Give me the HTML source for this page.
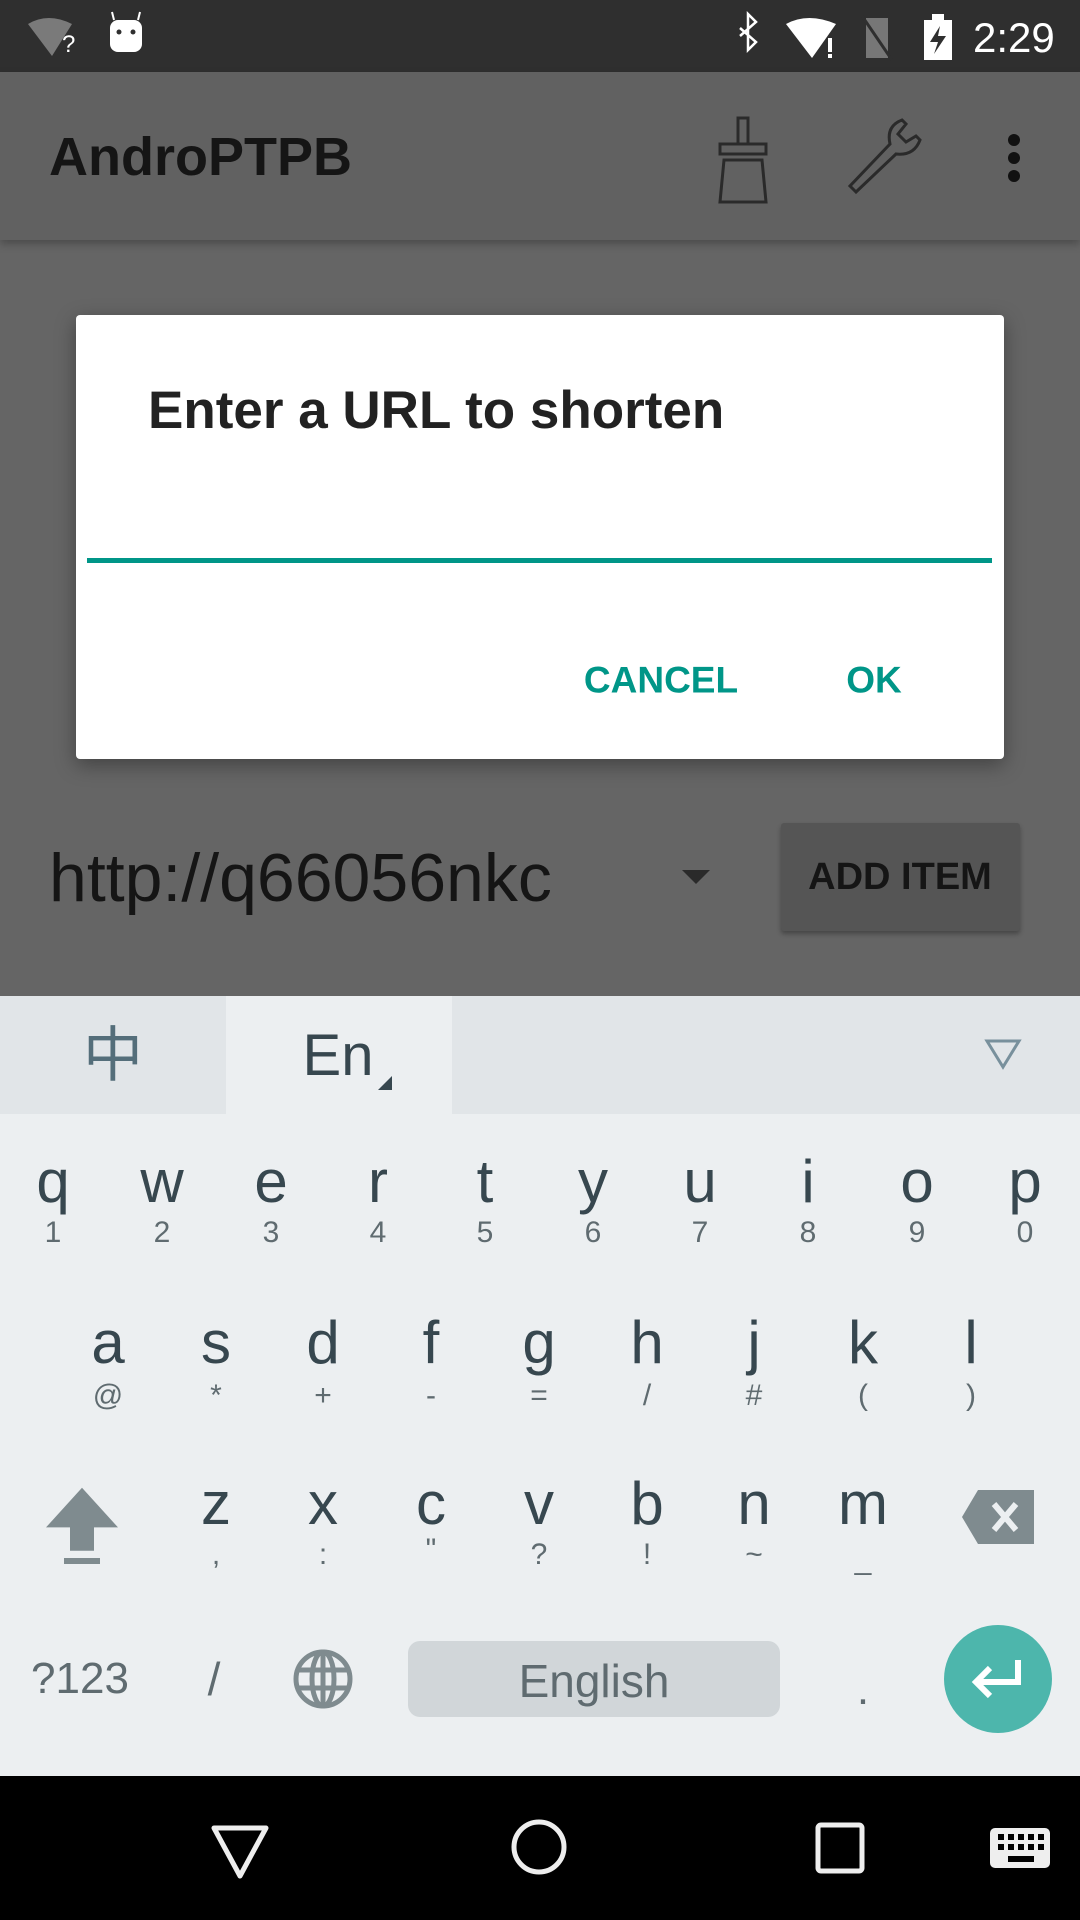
<!DOCTYPE html>
<html><head><meta charset="utf-8"><style>
*{margin:0;padding:0;box-sizing:border-box}
body{width:1080px;height:1920px;position:relative;overflow:hidden;background:#656565;font-family:"Liberation Sans","Noto Sans CJK SC",sans-serif}
.a{position:absolute}
.c{position:absolute;transform:translate(-50%,-50%);white-space:nowrap;line-height:1}
.k{font-size:60px;color:#37474f}
.s{font-size:30px;color:#5f6b70}
</style></head><body>
<div class="a" style="left:0;top:0;width:1080px;height:72px;background:#2f2f2f"></div>
<svg class="a" style="left:0;top:0" width="1080" height="72">
<path d="M28 24 Q48 12 72 24 L52 56 Z" fill="#7a7a7a"/>
<text x="62" y="52" fill="#fff" font-size="24" font-family="Liberation Sans">?</text>
<rect x="110" y="20" width="32" height="32" rx="8" fill="#fff"/>
<line x1="114" y1="20" x2="112" y2="12" stroke="#fff" stroke-width="2"/><line x1="138" y1="20" x2="140" y2="12" stroke="#fff" stroke-width="2"/>
<circle cx="119" cy="32" r="2.5" fill="#2f2f2f"/><circle cx="133" cy="32" r="2.5" fill="#2f2f2f"/>
<path d="M740 28 L756 42 L748 50 V14 L756 22 L740 36" fill="none" stroke="#fff" stroke-width="2.5"/>
<path d="M786 24 Q808 12 836 24 L812 58 Z" fill="#fff"/>
<rect x="828" y="38" width="4" height="14" fill="#fff"/><rect x="828" y="54" width="4" height="4" fill="#fff"/>
<path d="M866 18 H888 V58 H866 Z" fill="#777"/><line x1="862" y1="16" x2="892" y2="60" stroke="#2f2f2f" stroke-width="3"/>
<rect x="924" y="20" width="28" height="40" fill="#fff"/><rect x="932" y="14" width="12" height="6" fill="#fff"/>
<path d="M940 26 L930 42 H938 L934 54 L946 36 H938 Z" fill="#2f2f2f"/>
<text x="973" y="52" fill="#fff" font-size="42" font-family="Liberation Sans">2:29</text>
</svg>
<div class="a" style="left:0;top:72px;width:1080px;height:168px;background:#616161;box-shadow:0 4px 8px rgba(0,0,0,.25)"></div>
<div class="a" style="left:49px;top:126px;font-size:54px;font-weight:bold;color:#151515">AndroPTPB</div>
<svg class="a" style="left:700px;top:110px" width="360" height="100">
<g fill="none" stroke="#2a2a2a" stroke-width="3">
<rect x="38" y="8" width="10" height="26"/><rect x="20" y="34" width="46" height="10"/>
<path d="M24 50 H62 L66 92 H20 Z"/>
<path d="M156 82 L150 76 L190 34 Q186 16 202 10 L206 14 L198 24 L206 32 L216 26 L220 30 Q214 46 196 44 Z"/>
</g>
<circle cx="314" cy="30" r="6" fill="#111"/><circle cx="314" cy="48" r="6" fill="#111"/><circle cx="314" cy="66" r="6" fill="#111"/>
</svg>
<div class="a" style="left:76px;top:315px;width:928px;height:444px;background:#fff;border-radius:4px;box-shadow:0 6px 20px rgba(0,0,0,.35)"></div>
<div class="a" style="left:148px;top:384px;font-size:53px;font-weight:bold;color:#222;line-height:1">Enter a URL to shorten</div>
<div class="a" style="left:87px;top:558px;width:905px;height:5px;background:#009688"></div>
<div class="c" style="left:661px;top:680px;font-size:37px;font-weight:bold;color:#009688">CANCEL</div>
<div class="c" style="left:874px;top:680px;font-size:37px;font-weight:bold;color:#009688">OK</div>
<div class="a" style="left:49px;top:844px;font-size:68px;color:#151515;line-height:1">http://q66056nkc</div>
<svg class="a" style="left:680px;top:868px" width="32" height="18"><path d="M2 2 H30 L16 16 Z" fill="#2a2a2a"/></svg>
<div class="a" style="left:781px;top:823px;width:239px;height:108px;background:#555;border-radius:3px;box-shadow:0 3px 5px rgba(0,0,0,.3)"></div>
<div class="c" style="left:900px;top:877px;font-size:38px;font-weight:bold;color:#151515">ADD ITEM</div>
<div class="a" style="left:0;top:996px;width:1080px;height:780px;background:#eceff1"></div>
<div class="a" style="left:0;top:996px;width:1080px;height:118px;background:#e1e5e8"></div>
<div class="a" style="left:226px;top:996px;width:226px;height:118px;background:#eceff1"></div>
<div class="c" style="left:113px;top:1056px;font-size:60px;color:#546e7a">中</div>
<div class="c" style="left:338px;top:1056px;font-size:58px;color:#37474f">En</div>
<svg class="a" style="left:376px;top:1074px" width="18" height="18"><path d="M16 2 V16 H2 Z" fill="#37474f"/></svg>
<svg class="a" style="left:984px;top:1038px" width="38" height="32"><path d="M3 3 H35 L19 29 Z" fill="none" stroke="#78909c" stroke-width="3"/></svg>
<div class="c k" style="left:53px;top:1182px">q</div><div class="c s" style="left:53px;top:1233px">1</div>
<div class="c k" style="left:162px;top:1182px">w</div><div class="c s" style="left:162px;top:1233px">2</div>
<div class="c k" style="left:271px;top:1182px">e</div><div class="c s" style="left:271px;top:1233px">3</div>
<div class="c k" style="left:378px;top:1182px">r</div><div class="c s" style="left:378px;top:1233px">4</div>
<div class="c k" style="left:485px;top:1182px">t</div><div class="c s" style="left:485px;top:1233px">5</div>
<div class="c k" style="left:593px;top:1182px">y</div><div class="c s" style="left:593px;top:1233px">6</div>
<div class="c k" style="left:700px;top:1182px">u</div><div class="c s" style="left:700px;top:1233px">7</div>
<div class="c k" style="left:808px;top:1182px">i</div><div class="c s" style="left:808px;top:1233px">8</div>
<div class="c k" style="left:917px;top:1182px">o</div><div class="c s" style="left:917px;top:1233px">9</div>
<div class="c k" style="left:1025px;top:1182px">p</div><div class="c s" style="left:1025px;top:1233px">0</div>
<div class="c k" style="left:108px;top:1343px">a</div><div class="c s" style="left:108px;top:1396px">@</div>
<div class="c k" style="left:216px;top:1343px">s</div><div class="c s" style="left:216px;top:1396px">*</div>
<div class="c k" style="left:323px;top:1343px">d</div><div class="c s" style="left:323px;top:1396px">+</div>
<div class="c k" style="left:431px;top:1343px">f</div><div class="c s" style="left:431px;top:1396px">-</div>
<div class="c k" style="left:539px;top:1343px">g</div><div class="c s" style="left:539px;top:1396px">=</div>
<div class="c k" style="left:647px;top:1343px">h</div><div class="c s" style="left:647px;top:1396px">/</div>
<div class="c k" style="left:754px;top:1343px">j</div><div class="c s" style="left:754px;top:1396px">#</div>
<div class="c k" style="left:863px;top:1343px">k</div><div class="c s" style="left:863px;top:1396px">(</div>
<div class="c k" style="left:971px;top:1343px">l</div><div class="c s" style="left:971px;top:1396px">)</div>
<div class="c k" style="left:216px;top:1504px">z</div><div class="c s" style="left:216px;top:1555px">,</div>
<div class="c k" style="left:323px;top:1504px">x</div><div class="c s" style="left:323px;top:1555px">:</div>
<div class="c k" style="left:431px;top:1504px">c</div><div class="c s" style="left:431px;top:1550px">"</div>
<div class="c k" style="left:539px;top:1504px">v</div><div class="c s" style="left:539px;top:1555px">?</div>
<div class="c k" style="left:647px;top:1504px">b</div><div class="c s" style="left:647px;top:1555px">!</div>
<div class="c k" style="left:754px;top:1504px">n</div><div class="c s" style="left:754px;top:1555px">~</div>
<div class="c k" style="left:863px;top:1504px">m</div><div class="c s" style="left:863px;top:1560px">_</div>
<svg class="a" style="left:44px;top:1486px" width="76" height="80"><path d="M38 2 L74 46 H50 V72 H26 V46 H2 Z" fill="#7f8b8f" transform="scale(1,0.9)"/><rect x="20" y="72" width="36" height="6" fill="#7f8b8f"/></svg>
<svg class="a" style="left:962px;top:1490px" width="74" height="54"><path d="M16 0 H72 V54 H16 L0 27 Z" fill="#7f8b8f"/><path d="M32 14 L54 40 M54 14 L32 40" stroke="#eceff1" stroke-width="6"/></svg>
<div class="c" style="left:80px;top:1679px;font-size:44px;color:#5f6b70">?123</div>
<div class="c" style="left:214px;top:1679px;font-size:46px;color:#5f6b70">/</div>
<svg class="a" style="left:292px;top:1648px" width="62" height="62"><g fill="none" stroke="#7f8b8f" stroke-width="5"><circle cx="31" cy="31" r="27"/><ellipse cx="31" cy="31" rx="11" ry="27"/><line x1="31" y1="4" x2="31" y2="58"/><line x1="6" y1="22" x2="56" y2="22"/><line x1="6" y1="40" x2="56" y2="40"/></g></svg>
<div class="a" style="left:408px;top:1641px;width:372px;height:76px;background:#d1d6d9;border-radius:12px"></div>
<div class="c" style="left:594px;top:1681px;font-size:46px;color:#5f6b70">English</div>
<div class="c" style="left:863px;top:1690px;font-size:44px;color:#5f6b70">.</div>
<div class="a" style="left:944px;top:1625px;width:108px;height:108px;border-radius:50%;background:#4db6ac"></div>
<svg class="a" style="left:968px;top:1652px" width="60" height="54"><path d="M50 8 V30 H10 M22 16 L8 30 L22 44" fill="none" stroke="#fff" stroke-width="6"/></svg>
<div class="a" style="left:0;top:1776px;width:1080px;height:144px;background:#000"></div>
<svg class="a" style="left:0;top:1776px" width="1080" height="144">
<path d="M214 52 H266 L240 100 Z" fill="none" stroke="#eee" stroke-width="5" stroke-linejoin="round"/>
<circle cx="539" cy="71" r="25" fill="none" stroke="#eee" stroke-width="5"/>
<rect x="818" y="49" width="44" height="46" rx="3" fill="none" stroke="#eee" stroke-width="5"/>
<rect x="990" y="52" width="60" height="40" rx="5" fill="#eee"/>
<g fill="#000"><rect x="998" y="58" width="6" height="6"/><rect x="1008" y="58" width="6" height="6"/><rect x="1018" y="58" width="6" height="6"/><rect x="1028" y="58" width="6" height="6"/><rect x="1038" y="58" width="6" height="6"/>
<rect x="998" y="68" width="6" height="6"/><rect x="1008" y="68" width="6" height="6"/><rect x="1018" y="68" width="6" height="6"/><rect x="1028" y="68" width="6" height="6"/><rect x="1038" y="68" width="6" height="6"/>
<rect x="1008" y="80" width="26" height="6"/></g>
</svg>
</body></html>
